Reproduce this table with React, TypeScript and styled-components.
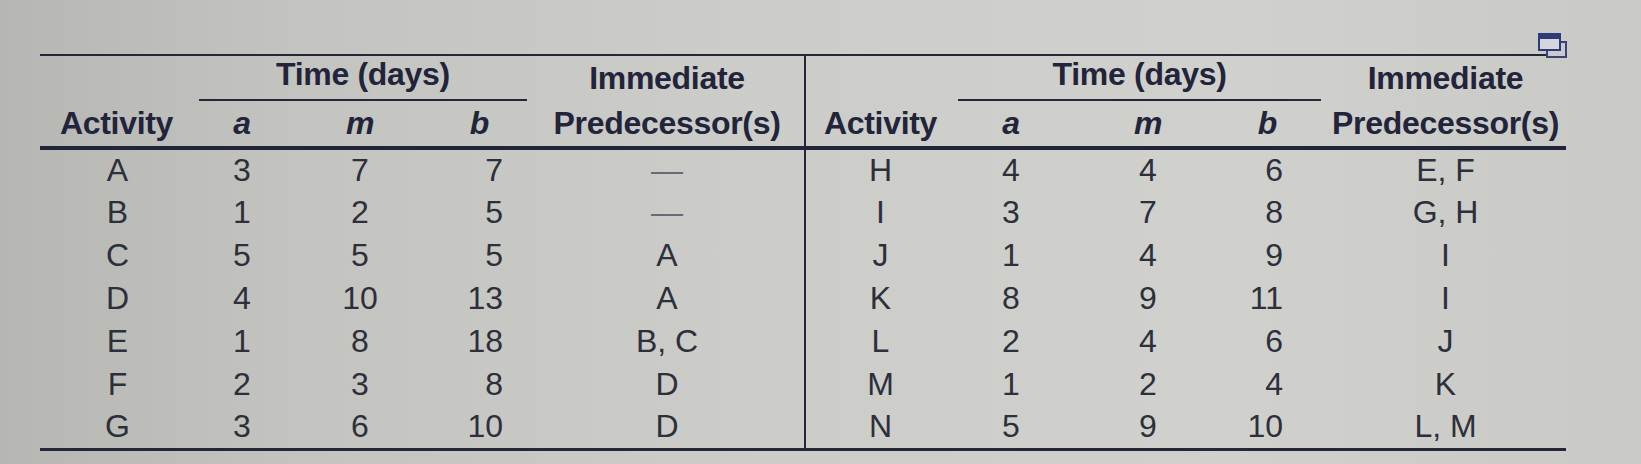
import React from "react";
import styled, { createGlobalStyle } from "styled-components";

const GlobalStyle = createGlobalStyle`
  html, body {
    margin: 0;
    padding: 0;
  }
  body {
    width: 1641px;
    height: 464px;
    overflow: hidden;
    background: linear-gradient(90deg, #b6b7b2 0%, #c3c4bf 18%, #cccdc8 45%, #d0d1cc 75%, #c9cac5 100%);
    font-family: "Liberation Sans", Arial, sans-serif;
  }
`;

const Page = styled.div`
  position: relative;
  padding: 54px 0 0 40px;
`;

const CopyIcon = styled.svg`
  position: absolute;
  left: 1538px;
  top: 33px;
`;

const Table = styled.table`
  width: 1526px;
  table-layout: fixed;
  border-collapse: collapse;
  border-top: 2px solid #24263a;
  border-bottom: 3px solid #24263a;
  color: #2d2f3b;
`;

const HeadRow = styled.tr<{ $first?: boolean }>`
  height: ${(p) => (p.$first ? 45 : 47)}px;
  border-bottom: ${(p) => (p.$first ? "none" : "4px solid #22243a")};
`;

const Row = styled.tr`
  height: 43px;
`;

const Th = styled.th<{ $align?: string; $pad?: number; $lead?: number; $divider?: boolean; $italic?: boolean }>`
  padding: 0 ${(p) => p.$pad ?? 0}px 0 ${(p) => p.$lead ?? 0}px;
  text-align: ${(p) => p.$align ?? "center"};
  font-size: 32px;
  font-weight: 700;
  font-style: ${(p) => (p.$italic ? "italic" : "normal")};
  color: #21243a;
  white-space: nowrap;
  vertical-align: middle;
  border-left: ${(p) => (p.$divider ? "2px solid #24263a" : "none")};
  letter-spacing: -0.3px;
`;

const GroupTitle = styled.div<{ $left: number; $right: number }>`
  margin: 0 ${(p) => p.$right}px 0 ${(p) => p.$left}px;
  padding-bottom: 6px;
  border-bottom: 2px solid #24263a;
`;

const Td = styled.td<{ $align?: string; $pad?: number; $lead?: number; $divider?: boolean; $dash?: boolean }>`
  padding: 0 ${(p) => p.$pad ?? 0}px 0 ${(p) => p.$lead ?? 0}px;
  text-align: ${(p) => p.$align ?? "center"};
  font-family: "Liberation Sans Narrow", "Arial Narrow", "Liberation Sans", sans-serif;
  font-size: 32px;
  font-weight: 400;
  color: ${(p) => (p.$dash ? "#686a74" : "#2d2f3b")};
  white-space: nowrap;
  vertical-align: middle;
  border-left: ${(p) => (p.$divider ? "2px solid #24263a" : "none")};
`;

type Line = [string, string, string, string, string];

const left: Line[] = [
  ["A", "3", "7", "7", "—"],
  ["B", "1", "2", "5", "—"],
  ["C", "5", "5", "5", "A"],
  ["D", "4", "10", "13", "A"],
  ["E", "1", "8", "18", "B, C"],
  ["F", "2", "3", "8", "D"],
  ["G", "3", "6", "10", "D"],
];

const right: Line[] = [
  ["H", "4", "4", "6", "E, F"],
  ["I", "3", "7", "8", "G, H"],
  ["J", "1", "4", "9", "I"],
  ["K", "8", "9", "11", "I"],
  ["L", "2", "4", "6", "J"],
  ["M", "1", "2", "4", "K"],
  ["N", "5", "9", "10", "L, M"],
];

const widths = [147, 110, 126, 107, 275, 150, 112, 162, 96, 241];

const DataCells = ({ line, divider, bPad, lead }: { line: Line; divider?: boolean; bPad: number; lead: number }) => (
  <>
    <Td $divider={divider} $lead={lead}>
      {line[0]}
    </Td>
    <Td>{line[1]}</Td>
    <Td>{line[2]}</Td>
    <Td $align="right" $pad={bPad}>
      {line[3]}
    </Td>
    <Td $dash={line[4] === "—"}>{line[4]}</Td>
  </>
);

export default function App() {
  return (
    <>
      <GlobalStyle />
      <Page>
        <CopyIcon width="30" height="26" viewBox="0 0 30 26">
          <rect x="9" y="9" width="19" height="15" fill="#c9cad0" stroke="#39456f" strokeWidth="2" />
          <rect x="1" y="1" width="21" height="16" fill="#d4d6de" stroke="#2e3b78" strokeWidth="2" />
          <rect x="1" y="1" width="21" height="5" fill="#2e3b78" />
        </CopyIcon>
        <Table>
          <colgroup>
            {widths.map((w, i) => (
              <col key={i} style={{ width: w }} />
            ))}
          </colgroup>
          <thead>
            <HeadRow $first>
              <Th />
              <Th colSpan={3}>
                <GroupTitle $left={12} $right={3}>Time (days)</GroupTitle>
              </Th>
              <Th>Immediate</Th>
              <Th $divider />
              <Th colSpan={3}>
                <GroupTitle $left={3} $right={4}>Time (days)</GroupTitle>
              </Th>
              <Th>Immediate</Th>
            </HeadRow>
            <HeadRow>
              <Th $lead={6}>Activity</Th>
              <Th $italic>a</Th>
              <Th $italic>m</Th>
              <Th $italic $align="right" $pad={41}>
                b
              </Th>
              <Th>Predecessor(s)</Th>
              <Th $divider>Activity</Th>
              <Th $italic>a</Th>
              <Th $italic>m</Th>
              <Th $italic $align="right" $pad={48}>
                b
              </Th>
              <Th>Predecessor(s)</Th>
            </HeadRow>
          </thead>
          <tbody>
            {left.map((l, i) => (
              <Row key={l[0]}>
                <DataCells line={l} bPad={27} lead={8} />
                <DataCells line={right[i]} divider bPad={42} lead={0} />
              </Row>
            ))}
          </tbody>
        </Table>
      </Page>
    </>
  );
}
